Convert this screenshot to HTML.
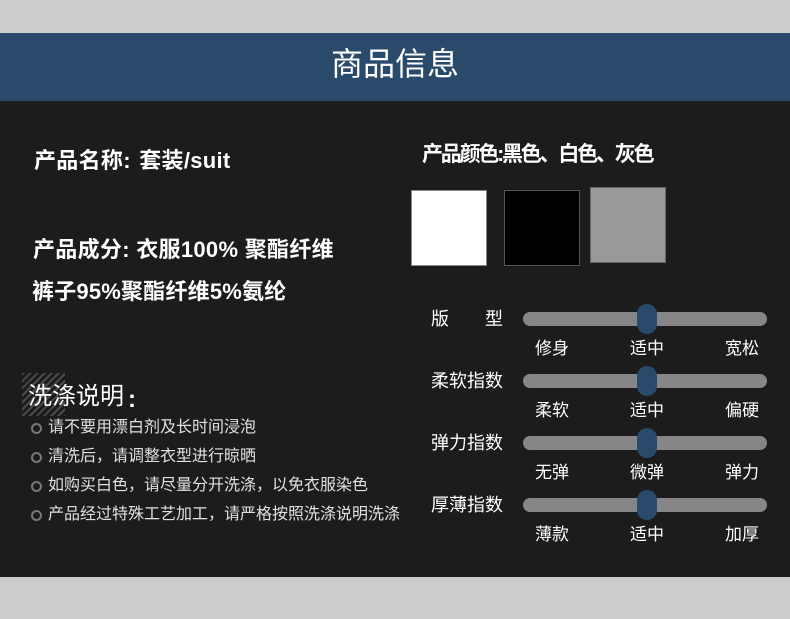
<!DOCTYPE html>
<html lang="zh-CN"><head><meta charset="utf-8">
<style>
html,body{margin:0;padding:0}
body{width:790px;height:619px;background:#cccccc;position:relative;overflow:hidden;font-family:"Liberation Sans","Noto Sans CJK SC",sans-serif;color:#fff}
.a{position:absolute;white-space:nowrap}
.hdr{left:0;top:33px;width:790px;height:68px;background:#2a4a6b;text-align:center;font-size:32px;line-height:63px}
.main{left:0;top:101px;width:790px;height:476px;background:#1c1c1c}
.b{font-weight:700;font-size:22px;line-height:30px;letter-spacing:.3px}
.li{left:48px;font-size:16px;line-height:22px;color:#e0e0e0}
.dot{left:31px;width:7px;height:7px;border:2.5px solid #777;border-radius:50%}
.sw{box-sizing:border-box;width:76px;height:76px;border:1px solid #888}
.track{left:523px;width:244px;height:14px;background:#868686;border-radius:7px}
.knob{left:637px;width:20px;height:30px;background:#2a4a6b;border-radius:10px}
.lab{font-size:17px;line-height:24px}
.t{font-size:18px;line-height:24px}
</style></head><body>
<div class="a hdr">商品信息</div>
<div class="a main"></div>

<div class="a b" style="left:34px;top:146px;word-spacing:2px">产品名称: 套装/suit</div>
<div class="a b" style="left:33px;top:235px">产品成分: 衣服100% 聚酯纤维</div>
<div class="a b" style="left:32px;top:277px;letter-spacing:.2px">裤子95%聚酯纤维5%氨纶</div>

<div class="a b" style="left:422px;top:140px;font-size:21px;letter-spacing:-2.2px">产品颜色:黑色、白色、灰色</div>
<div class="a sw" style="left:411px;top:190px;background:#fff"></div>
<div class="a sw" style="left:504px;top:190px;background:#000;border-color:#555"></div>
<div class="a sw" style="left:590px;top:187px;background:#999;border-color:#666"></div>

<div class="a" style="left:22px;top:373px;width:43px;height:43px;background:repeating-linear-gradient(135deg,#4a4a4a 0 2px,#1c1c1c 2px 5px)"></div>
<div class="a" style="left:28px;top:381px;font-size:24px;line-height:32px">洗涤说明</div>
<div class="a" style="left:128px;top:384px;font-size:24px;line-height:32px;font-weight:700">:</div>
<div class="a dot" style="top:423px"></div><div class="a li" style="top:417px">请不要用漂白剂及长时间浸泡</div>
<div class="a dot" style="top:452px"></div><div class="a li" style="top:446px">清洗后，请调整衣型进行晾晒</div>
<div class="a dot" style="top:481px"></div><div class="a li" style="top:475px">如购买白色，请尽量分开洗涤，以免衣服染色</div>
<div class="a dot" style="top:510px"></div><div class="a li" style="top:504px">产品经过特殊工艺加工，请严格按照洗涤说明洗涤</div>

<div class="a t" style="left:431px;top:307px">版</div><div class="a t" style="left:485px;top:307px">型</div>
<div class="a track" style="top:312px"></div><div class="a knob" style="top:304px"></div>
<div class="a lab" style="left:535px;top:337px">修身</div><div class="a lab" style="left:630px;top:337px">适中</div><div class="a lab" style="left:725px;top:337px">宽松</div>

<div class="a t" style="left:431px;top:369px">柔软指数</div>
<div class="a track" style="top:374px"></div><div class="a knob" style="top:366px"></div>
<div class="a lab" style="left:535px;top:399px">柔软</div><div class="a lab" style="left:630px;top:399px">适中</div><div class="a lab" style="left:725px;top:399px">偏硬</div>

<div class="a t" style="left:431px;top:431px">弹力指数</div>
<div class="a track" style="top:436px"></div><div class="a knob" style="top:428px"></div>
<div class="a lab" style="left:535px;top:461px">无弹</div><div class="a lab" style="left:630px;top:461px">微弹</div><div class="a lab" style="left:725px;top:461px">弹力</div>

<div class="a t" style="left:431px;top:493px">厚薄指数</div>
<div class="a track" style="top:498px"></div><div class="a knob" style="top:490px"></div>
<div class="a lab" style="left:535px;top:523px">薄款</div><div class="a lab" style="left:630px;top:523px">适中</div><div class="a lab" style="left:725px;top:523px">加厚</div>
</body></html>
